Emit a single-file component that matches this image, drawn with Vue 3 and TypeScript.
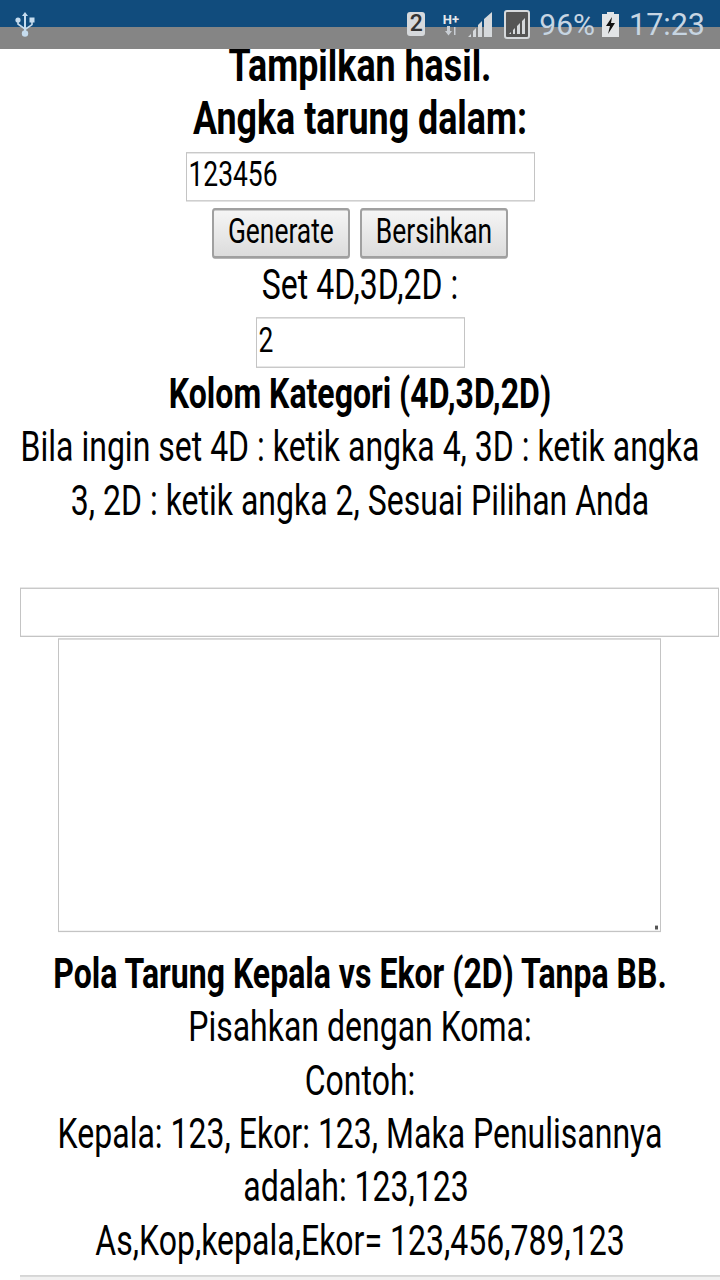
<script setup lang="ts">
const setCode = "2";
const numbers = "123456";
</script>

<template>
  <div class="page">
    <main class="sheet">
      <div class="ln ln--h">Tampilkan hasil.</div>
      <div class="ln ln--h">Angka tarung dalam:</div>
      <input class="inp inp--num" :value="numbers" />
      <div class="btns">
        <button class="btn" type="button">Generate</button>
        <button class="btn" type="button">Bersihkan</button>
      </div>
      <div class="ln">Set 4D,3D,2D :</div>
      <input class="inp inp--set" :value="setCode" />
      <div class="ln ln--b">Kolom Kategori (4D,3D,2D)</div>
      <div class="ln">Bila ingin set 4D : ketik angka 4, 3D : ketik angka</div>
      <div class="ln">3, 2D : ketik angka 2, Sesuai Pilihan Anda</div>
      <div class="ln"></div>
      <input class="inp inp--wide" />
      <div class="area-wrap">
        <textarea class="area"></textarea>
      </div>
      <div class="ln ln--b ln--pola">Pola Tarung Kepala vs Ekor (2D) Tanpa BB.</div>
      <div class="ln">Pisahkan dengan Koma:</div>
      <div class="ln">Contoh:</div>
      <div class="ln">Kepala: 123, Ekor: 123, Maka Penulisannya</div>
      <div class="ln ln--shift">adalah: 123,123</div>
      <div class="ln">As,Kop,kepala,Ekor= 123,456,789,123</div>
      <div class="foot"></div>
    </main>

    <header class="status">
      <svg class="usb" width="20" height="28" viewBox="0 0 20 28" fill="#c6dcee">
        <path d="M10 1l3 4h-2v15h-2V5H7z" />
        <circle cx="10" cy="22.5" r="3.2" />
        <circle cx="3" cy="9" r="2.6" />
        <rect x="14.5" y="6.500" width="5" height="5" />
        <path d="M2.200 10h1.600v2.500l5.500 4v2l-7.100-5zM16.200 11h1.600v3l-7.100 5v-2l5.500-3.800z" />
      </svg>
      <div class="sim">2</div>
      <div class="net">
        <span class="net__h">H+</span>
        <svg width="14" height="10" viewBox="0 0 14 10" fill="#c9ced4">
          <path d="M3 0h3v5h2L4.500 9.500 1 5h2zM10 1h1.500v8H10z" />
        </svg>
      </div>
      <svg class="sig" width="25" height="25" viewBox="0 0 25 25" fill="#d6d9dc">
        <path d="M0 25l3-3v3zM5 25v-6l3-3v9zM10 25V13l4-4v16zM16 25V7l8-7v25z" />
      </svg>
      <svg class="sig2" width="26" height="29" viewBox="0 0 26 29">
        <rect x="1" y="1" width="24" height="27" rx="2" fill="#555" stroke="#d6d9dc" stroke-width="2" />
        <path d="M5 24l2-2v2zM9 24v-4l2-2v6zM13 24v-8l3-3v11zM18 24V11l3-3v16z" fill="#d6d9dc" />
      </svg>
      <span class="pct">96%</span>
      <svg class="bat" width="17" height="25" viewBox="0 0 17 25">
        <path d="M5 0h7v2h5v23H0V2h5z" fill="#e2e4e6" />
        <path d="M10 5L4 14h4l-2 8 7-11H9z" fill="#111" />
      </svg>
      <span class="time">17:23</span>
    </header>
  </div>
</template>

<style>
html,
body {
  margin: 0;
  background: #fff;
}
</style>

<style scoped>
.page {
  position: relative;
  width: 720px;
  height: 1280px;
  overflow: hidden;
  background: #fff;
  font-family: Roboto, "Liberation Sans", sans-serif;
  color: #000;
}
/* the shot is stretched vertically, so the whole sheet gets scaled */
.sheet {
  display: flex;
  flex-direction: column;
  align-items: center;
  padding-top: 29.6px;
  transform: scaleY(1.3);
  transform-origin: top left;
  font-size: 32px;
}
.ln {
  width: 100%;
  height: 41px;
  line-height: 41px;
  text-align: center;
  white-space: nowrap;
}
.ln--b {
  font-weight: 700;
}
.ln--h {
  font-size: 35.8px;
  font-weight: 700;
}
.ln--pola {
  margin-top: 12.5px;
}
.ln--shift {
  box-sizing: border-box;
  padding-right: 8px;
}
.inp {
  box-sizing: border-box;
  height: 38px;
  padding: 0 2px 3px;
  border: 1px solid #c4c4c4;
  border-radius: 0;
  outline: none;
  background: #fff;
  color: #000;
  font: inherit;
  font-size: 26.4px;
}
.inp--num {
  width: 349px;
  margin-top: 5.3px;
}
.inp--set {
  width: 209px;
  height: 38.600px;
  margin-top: 4.600px;
}
.inp--wide {
  align-self: flex-start;
  width: 699px;
  margin: 4.800px 0 0 20px;
}
.btns {
  display: flex;
  justify-content: center;
  gap: 10px;
  margin-top: 5.400px;
}
.btn {
  box-sizing: border-box;
  height: 38.500px;
  padding: 0 14px 4px;
  border: 2px solid #a0a0a0;
  border-radius: 3px;
  background: linear-gradient(#f5f5f5, #dcdcdc);
  color: #000;
  font: inherit;
  font-size: 26.4px;
}
.area-wrap {
  position: relative;
  margin: 1.500px 1px 0 0;
}
.area-wrap::after {
  content: "";
  position: absolute;
  right: 3px;
  bottom: 2px;
  width: 3px;
  height: 2.500px;
  background: #555;
}
.area {
  box-sizing: border-box;
  display: block;
  width: 603px;
  height: 225.500px;
  padding: 2px;
  border: 1px solid #c4c4c4;
  border-radius: 0;
  outline: none;
  resize: none;
  background: #fff;
}
.foot {
  align-self: flex-start;
  width: 700px;
  height: 40px;
  margin: 5.500px 0 0 20px;
  border-top: 1.500px solid #c8c8c8;
  background: #f1f1f1;
}
.status {
  position: absolute;
  top: 0;
  left: 0;
  right: 0;
  height: 49px;
  display: flex;
  align-items: center;
  padding-right: 15px;
  box-sizing: border-box;
  background: linear-gradient(#114c7d 27px, #858585 27px);
  color: #c7d5e2;
}
.usb {
  margin-left: 15px;
  margin-right: auto;
}
.sim {
  box-sizing: border-box;
  width: 18px;
  height: 24px;
  margin-top: -1px;
  border-radius: 3px;
  background: #d6d9dc;
  color: #333;
  font-size: 23px;
  font-weight: 500;
  line-height: 24px;
  text-align: center;
}
.net {
  display: flex;
  flex-direction: column;
  align-items: center;
  width: 17px;
  margin-left: 17px;
}
.net__h {
  color: #e6e9ec;
  font-size: 13px;
  font-weight: 700;
  line-height: 13px;
}
.sig {
  margin-left: 9px;
}
.sig2 {
  margin-left: 11px;
  margin-top: -1px;
}
.pct {
  margin-left: 9px;
  font-size: 30px;
  line-height: 49px;
}
.bat {
  margin-left: 7px;
}
.time {
  margin-left: 10px;
  font-size: 30.5px;
  line-height: 49px;
}
</style>
